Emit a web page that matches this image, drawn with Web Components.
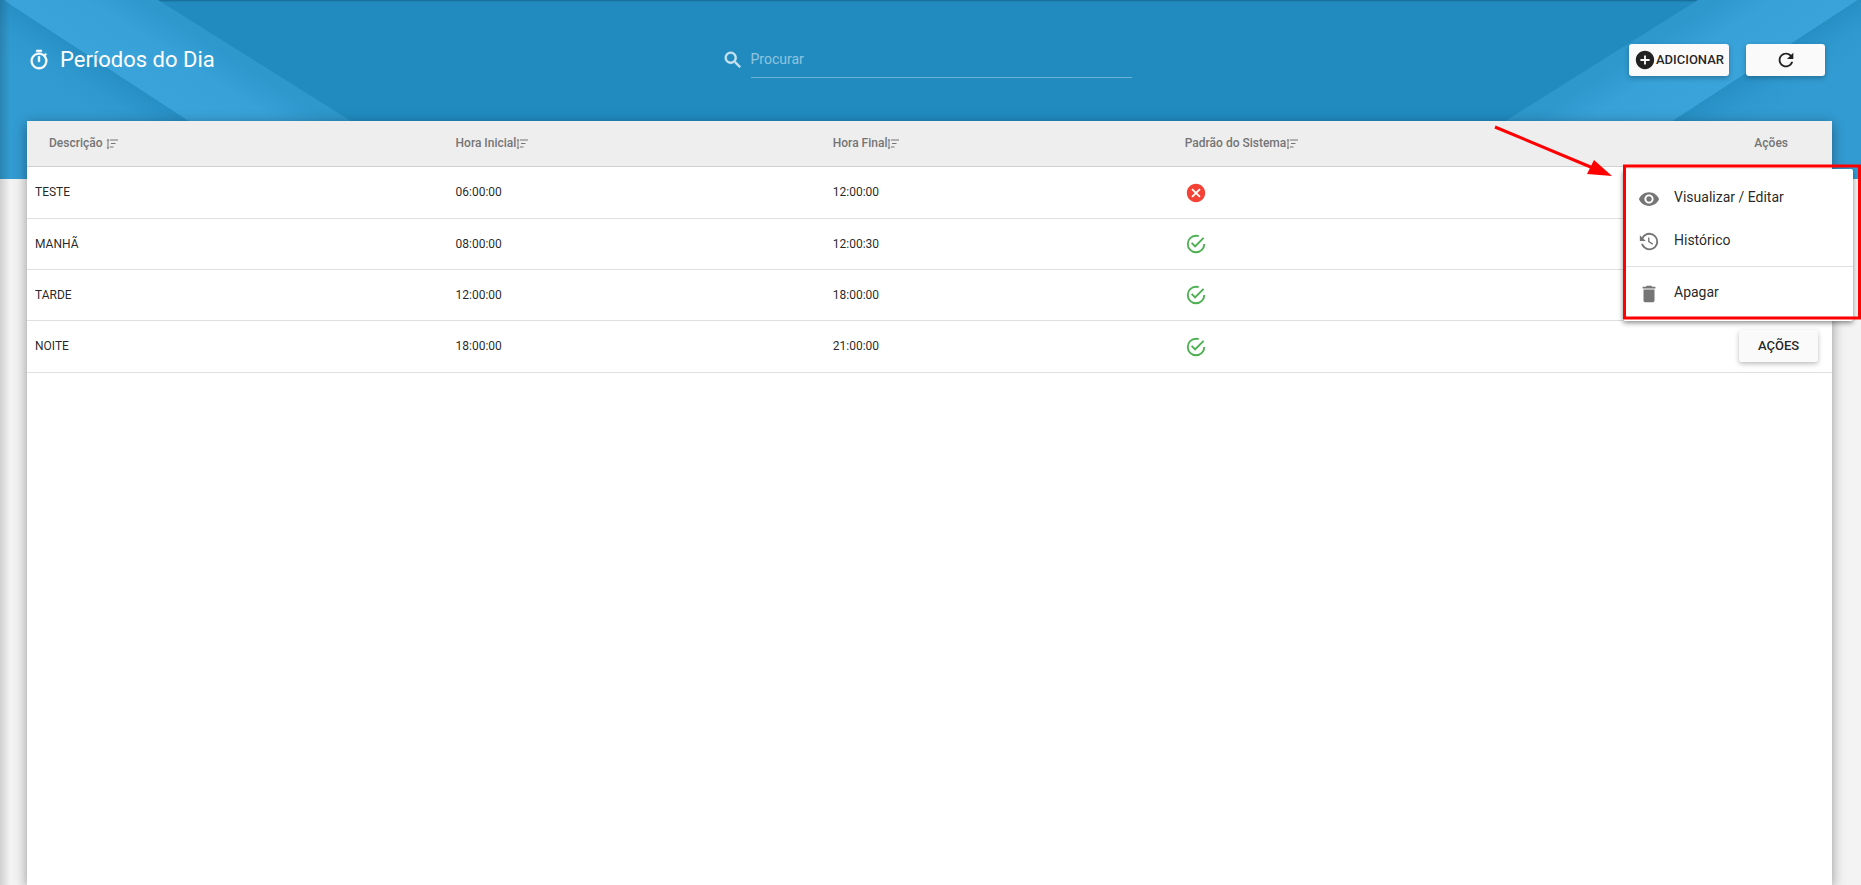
<!DOCTYPE html>
<html lang="pt-BR">
<head>
<meta charset="utf-8">
<title>Períodos do Dia</title>
<style>
  html, body { margin: 0; height: 100%; }
  body { overflow: hidden; background: #f3f3f3; color: rgba(0,0,0,.87); font: 14px/20px Roboto, sans-serif; }
</style>
</head>
<body>
<periods-page></periods-page>

<script>
const ICONS = {
  timer: '<path d="M15 1H9v2h6V1zm-4 13h2V8h-2v6zm8.03-6.61l1.42-1.42c-.43-.51-.9-.99-1.41-1.41l-1.42 1.42A8.962 8.962 0 0012 4c-4.97 0-9 4.03-9 9s4.02 9 9 9a8.994 8.994 0 007.03-14.61zM12 20c-3.87 0-7-3.13-7-7s3.13-7 7-7 7 3.13 7 7-3.13 7-7 7z" stroke="currentColor" stroke-width=".5"/>',
  search: '<path d="M15.5 14h-.79l-.28-.27A6.471 6.471 0 0016 9.5 6.5 6.5 0 109.5 16c1.61 0 3.09-.59 4.23-1.57l.27.28v.79l5 4.99L20.49 19l-4.99-5zm-6 0C7.01 14 5 11.99 5 9.5S7.01 5 9.5 5 14 7.01 14 9.5 11.99 14 9.5 14z" stroke="currentColor" stroke-width=".5"/>',
  add: '<path d="M12 2C6.48 2 2 6.48 2 12s4.48 10 10 10 10-4.48 10-10S17.52 2 12 2zm5 11h-4v4h-2v-4H7v-2h4V7h2v4h4v2z"/>',
  refresh: '<path d="M17.65 6.35A7.958 7.958 0 0012 4c-4.42 0-7.99 3.58-7.99 8s3.57 8 7.99 8c3.73 0 6.84-2.55 7.73-6h-2.08A5.99 5.99 0 0112 18c-3.31 0-6-2.69-6-6s2.69-6 6-6c1.66 0 3.14.69 4.22 1.78L13 11h7V4l-2.35 2.35z"/>',
  eye: '<path d="M12 4.5C7 4.5 2.73 7.61 1 12c1.73 4.39 6 7.5 11 7.5s9.27-3.11 11-7.5c-1.73-4.39-6-7.5-11-7.5zM12 17c-2.76 0-5-2.24-5-5s2.24-5 5-5 5 2.24 5 5-2.24 5-5 5zm0-8c-1.66 0-3 1.34-3 3s1.34 3 3 3 3-1.34 3-3-1.34-3-3-3z"/>',
  history: '<path d="M11,7V12.11L15.71,14.9L16.5,13.62L12.5,11.25V7M12.5,2C8.97,2 5.91,3.92 4.27,6.77L2,4.5V11H8.5L5.75,8.25C6.96,5.73 9.5,4 12.5,4A7.5,7.5 0 0,1 20,11.5A7.5,7.5 0 0,1 12.5,19C9.23,19 6.47,16.91 5.44,14H3.34C4.44,18.03 8.11,21 12.5,21C17.74,21 22,16.75 22,11.5A9.5,9.5 0 0,0 12.5,2Z"/>',
  trash: '<path d="M6 19c0 1.1.9 2 2 2h8c1.1 0 2-.9 2-2V7H6v12zM19 4h-3.5l-1-1h-5l-1 1H5v2h14V4z"/>',
  no: '<path d="M12,2C17.53,2 22,6.47 22,12C22,17.53 17.53,22 12,22C6.47,22 2,17.53 2,12C2,6.47 6.47,2 12,2M15.59,7L12,10.59L8.41,7L7,8.41L10.59,12L7,15.59L8.41,17L12,13.41L15.59,17L17,15.59L13.41,12L17,8.41L15.59,7Z"/>',
  yes: '<path d="M20,12A8,8 0 0,1 12,20A8,8 0 0,1 4,12A8,8 0 0,1 12,4C12.76,4 13.5,4.11 14.2,4.31L15.77,2.74C14.61,2.26 13.34,2 12,2A10,10 0 0,0 2,12A10,10 0 0,0 12,22A10,10 0 0,0 22,12M7.91,10.08L6.5,11.5L11,16L21,6L19.59,4.58L11,13.17L7.91,10.08Z"/>',
  sort: '<path d="M4 1.500L7 5H5v14h2L4 22.500 1 19h2V5H1zM8 3h16v2H8zM10 10h9v2h-9zM8 17h7v2H8z"/>'
};

function define(name, html, setup) {
  const tpl = document.createElement('template');
  tpl.innerHTML = html;
  customElements.define(name, class extends HTMLElement {
    constructor() {
      super();
      this.attachShadow({ mode: 'open' }).append(tpl.content.cloneNode(true));
    }
    connectedCallback() { if (setup) setup(this, this.shadowRoot); }
  });
}

define('ui-icon', `
<style>
  :host { display: inline-block; width: 22px; height: 22px; flex: none; }
  svg { display: block; width: 100%; height: 100%; fill: currentColor; }
</style>
<svg viewBox="0 0 24 24" aria-hidden="true"></svg>`,
(el, root) => { root.querySelector('svg').innerHTML = ICONS[el.getAttribute('name')]; });

define('raised-button', `
<style>
  :host { display: inline-block; }
  button { display: flex; align-items: center; justify-content: center; box-sizing: border-box;
    min-width: 79px; height: 32px; padding: 0 5px; border: 0; border-radius: 3px; background: #fafafa;
    color: rgba(0,0,0,.87); font: 500 13px/20px Roboto, sans-serif; text-transform: uppercase;
    white-space: nowrap; box-shadow: 0 2px 5px rgba(0,0,0,.26); }
</style>
<button type="button"><slot></slot></button>`,
(el, root) => {
  const label = el.getAttribute('label');
  if (label) root.querySelector('button').setAttribute('aria-label', label);
});

define('page-backdrop', `
<style>
  :host { display: block; position: relative; height: 179px; overflow: hidden;
    background: #218bc0; box-shadow: inset 0 2px 2px -1px rgba(0,0,0,.25); }
  svg { position: absolute; top: 0; width: 360px; height: 179px; }
  .left { left: 0; }
  .right { right: 0; transform: scaleX(-1); }
</style>
<svg class="left" viewBox="0 0 360 179" aria-hidden="true">
  <defs>
    <linearGradient id="band" gradientUnits="userSpaceOnUse" x1="95" y1="60" x2="136" y2="-4">
      <stop offset="0" stop-color="#3aa3d9"/><stop offset=".6" stop-color="#38a1d7"/><stop offset="1" stop-color="#2e97cc"/>
    </linearGradient>
    <linearGradient id="corner" gradientUnits="userSpaceOnUse" x1="95" y1="60" x2="68" y2="101">
      <stop offset="0" stop-color="#278fc4"/><stop offset=".5" stop-color="#2f98ce"/><stop offset="1" stop-color="#329bd1"/>
    </linearGradient>
  </defs>
  <path fill="url(#band)" d="M3 0H158L443 179H277z"/>
  <path fill="url(#corner)" d="M0 0H3L277 179H0z"/>
</svg>
<svg class="right" viewBox="0 0 360 179" aria-hidden="true">
  <defs>
    <linearGradient id="band2" gradientUnits="userSpaceOnUse" x1="95" y1="60" x2="136" y2="-4">
      <stop offset="0" stop-color="#3aa3d9"/><stop offset=".6" stop-color="#38a1d7"/><stop offset="1" stop-color="#2e97cc"/>
    </linearGradient>
    <linearGradient id="corner2" gradientUnits="userSpaceOnUse" x1="95" y1="60" x2="68" y2="101">
      <stop offset="0" stop-color="#278fc4"/><stop offset=".5" stop-color="#2f98ce"/><stop offset="1" stop-color="#329bd1"/>
    </linearGradient>
  </defs>
  <path fill="url(#band2)" d="M3 0H163L448 179H277z"/>
  <path fill="url(#corner2)" d="M0 0H3L277 179H0z"/>
</svg>`);

define('search-field', `
<style>
  :host { display: flex; align-items: center; gap: 7px; color: rgba(255,255,255,.75); }
  label { display: flex; }
  input { flex: 1; min-width: 0; height: 37px; box-sizing: border-box; padding: 0; border: 0;
    border-bottom: 1px solid rgba(255,255,255,.35); background: none; outline: 0;
    color: #fff; font: 14px/20px Roboto, sans-serif; }
  input::placeholder { color: rgba(255,255,255,.5); opacity: 1; }
</style>
<label for="q" aria-label="Procurar"><ui-icon name="search"></ui-icon></label>
<input id="q" type="text" placeholder="Procurar">`);

define('page-toolbar', `
<style>
  :host { display: grid; grid-template-columns: 1fr 410px 1fr; align-items: center; height: 121px;
    padding: 0 36px 2px 28px; box-sizing: border-box; color: #fff; }
  h1 { display: flex; align-items: center; gap: 10px; margin: 0; font: 400 22px/28px Roboto, sans-serif; }
  .actions { display: flex; justify-content: flex-end; gap: 17px; }
</style>
<h1><ui-icon name="timer"></ui-icon><slot></slot></h1>
<search-field></search-field>
<div class="actions"><slot name="actions"></slot></div>`);

define('periods-table', `
<style>
  :host { display: block; }
  table { width: 100%; table-layout: fixed; border-collapse: separate; border-spacing: 0; }
  th, td { box-sizing: border-box; padding: 0 8px 1px; text-align: left; white-space: nowrap; }
  th { height: 46px; padding-bottom: 2px; background: #eee; color: #757575; border-bottom: 1px solid #d0d0d0; font: 500 12px/16px Roboto, sans-serif; }
  th:first-child { padding-left: 22px; }
  th:last-child { padding-right: 44px; text-align: right; }
  th span { display: flex; align-items: center; }
  th:first-child span { gap: 3px; }
  th ui-icon { width: 12px; height: 12px; margin-top: 3px; }
  td { height: 51px; border-bottom: 1px solid #e0e0e0; font: 12px/16px Roboto, sans-serif; }
  td.flag { padding-bottom: 0; }
  tr:first-child td, tr:last-child td { height: 52px; }
  td:last-child { padding-right: 14px; text-align: right; }
  td ui-icon, raised-button { vertical-align: middle; }
  .no { color: #f44336; }
  .yes { color: #4caf50; }
  .c1 { width: 23.3%; } .c2 { width: 20.9%; } .c3 { width: 19.5%; }
</style>
<table>
  <colgroup><col class="c1"><col class="c2"><col class="c3"><col><col></colgroup>
  <thead><tr>
    <th><span>Descrição<ui-icon name="sort"></ui-icon></span></th>
    <th><span>Hora Inicial<ui-icon name="sort"></ui-icon></span></th>
    <th><span>Hora Final<ui-icon name="sort"></ui-icon></span></th>
    <th><span>Padrão do Sistema<ui-icon name="sort"></ui-icon></span></th>
    <th>Ações</th>
  </tr></thead>
  <tbody></tbody>
</table>`,
(el, root) => {
  const rows = [
    ['TESTE', '06:00:00', '12:00:00', 'no'],
    ['MANHÃ', '08:00:00', '12:00:30', 'yes'],
    ['TARDE', '12:00:00', '18:00:00', 'yes'],
    ['NOITE', '18:00:00', '21:00:00', 'yes', 'Ações']
  ];
  root.querySelector('tbody').innerHTML = rows.map(([name, start, end, flag, action]) =>
    `<tr><td>${name}</td><td>${start}</td><td>${end}</td><td class="flag"><ui-icon class="${flag}" name="${flag}"></ui-icon></td>` +
    `<td>${action ? `<raised-button>${action}</raised-button>` : ''}</td></tr>`).join('');
});

define('menu-item', `
<style>
  :host { display: block; }
  button { display: flex; align-items: center; gap: 14px; width: 100%; height: 43px; padding: 0 14px 2px 15px; border: 0;
    background: none; color: rgba(0,0,0,.87); font: 14px/20px Roboto, sans-serif; text-align: left; }
  ui-icon { color: #757575; margin-top: 5px; }
</style>
<button type="button" role="menuitem"><ui-icon></ui-icon><slot></slot></button>`,
(el, root) => {
  const icon = document.createElement('ui-icon');
  icon.setAttribute('name', el.getAttribute('icon'));
  root.querySelector('ui-icon').replaceWith(icon);
});

define('action-menu', `
<style>
  :host { display: block; box-sizing: border-box; width: 230px; padding: 7px 0; background: #fff;
    border-radius: 2px; box-shadow: 0 2px 5px rgba(0,0,0,.45); }
  hr { height: 1px; margin: 4px 0; border: 0; background: #e0e0e0; }
</style>
<div role="menu">
  <menu-item icon="eye">Visualizar / Editar</menu-item>
  <menu-item icon="history">Histórico</menu-item>
  <hr>
  <menu-item icon="trash">Apagar</menu-item>
</div>`);

define('callout-mark', `
<style>
  :host { display: block; pointer-events: none; }
  svg { display: block; width: 368px; height: 196px; }
</style>
<svg viewBox="0 0 368 196" aria-hidden="true">
  <path d="M2 2L100 43" stroke="#f00" stroke-width="3" fill="none"/>
  <path d="M101 35L119 51 94 49z" fill="#f00"/>
  <rect x="131.500" y="41" width="235" height="152" fill="none" stroke="#f00" stroke-width="3"/>
</svg>`);

define('periods-page', `
<style>
  :host { display: grid; grid-template-rows: 121px 1fr; position: relative; min-height: 100vh; overflow: hidden; }
  page-backdrop { position: absolute; inset: 0 0 auto; }
  page-toolbar, main { position: relative; }
  main { margin: 0 29px 0 27px; background: #fff; box-shadow: 0 3px 12px rgba(0,0,0,.4); }
  .edge { position: absolute; inset: 0 auto 0 0; width: 10px; background: linear-gradient(90deg, rgba(0,0,0,.15), transparent); }
  action-menu { position: absolute; top: 169px; right: 8px; }
  callout-mark { position: absolute; top: 125px; right: 0; }
</style>
<page-backdrop></page-backdrop>
<div class="edge"></div>
<page-toolbar>Períodos do Dia
  <raised-button slot="actions"><ui-icon name="add"></ui-icon>Adicionar</raised-button>
  <raised-button slot="actions" label="Atualizar"><ui-icon name="refresh"></ui-icon></raised-button>
</page-toolbar>
<main><periods-table></periods-table></main>
<action-menu></action-menu>
<callout-mark></callout-mark>`);
</script>
</body>
</html>
